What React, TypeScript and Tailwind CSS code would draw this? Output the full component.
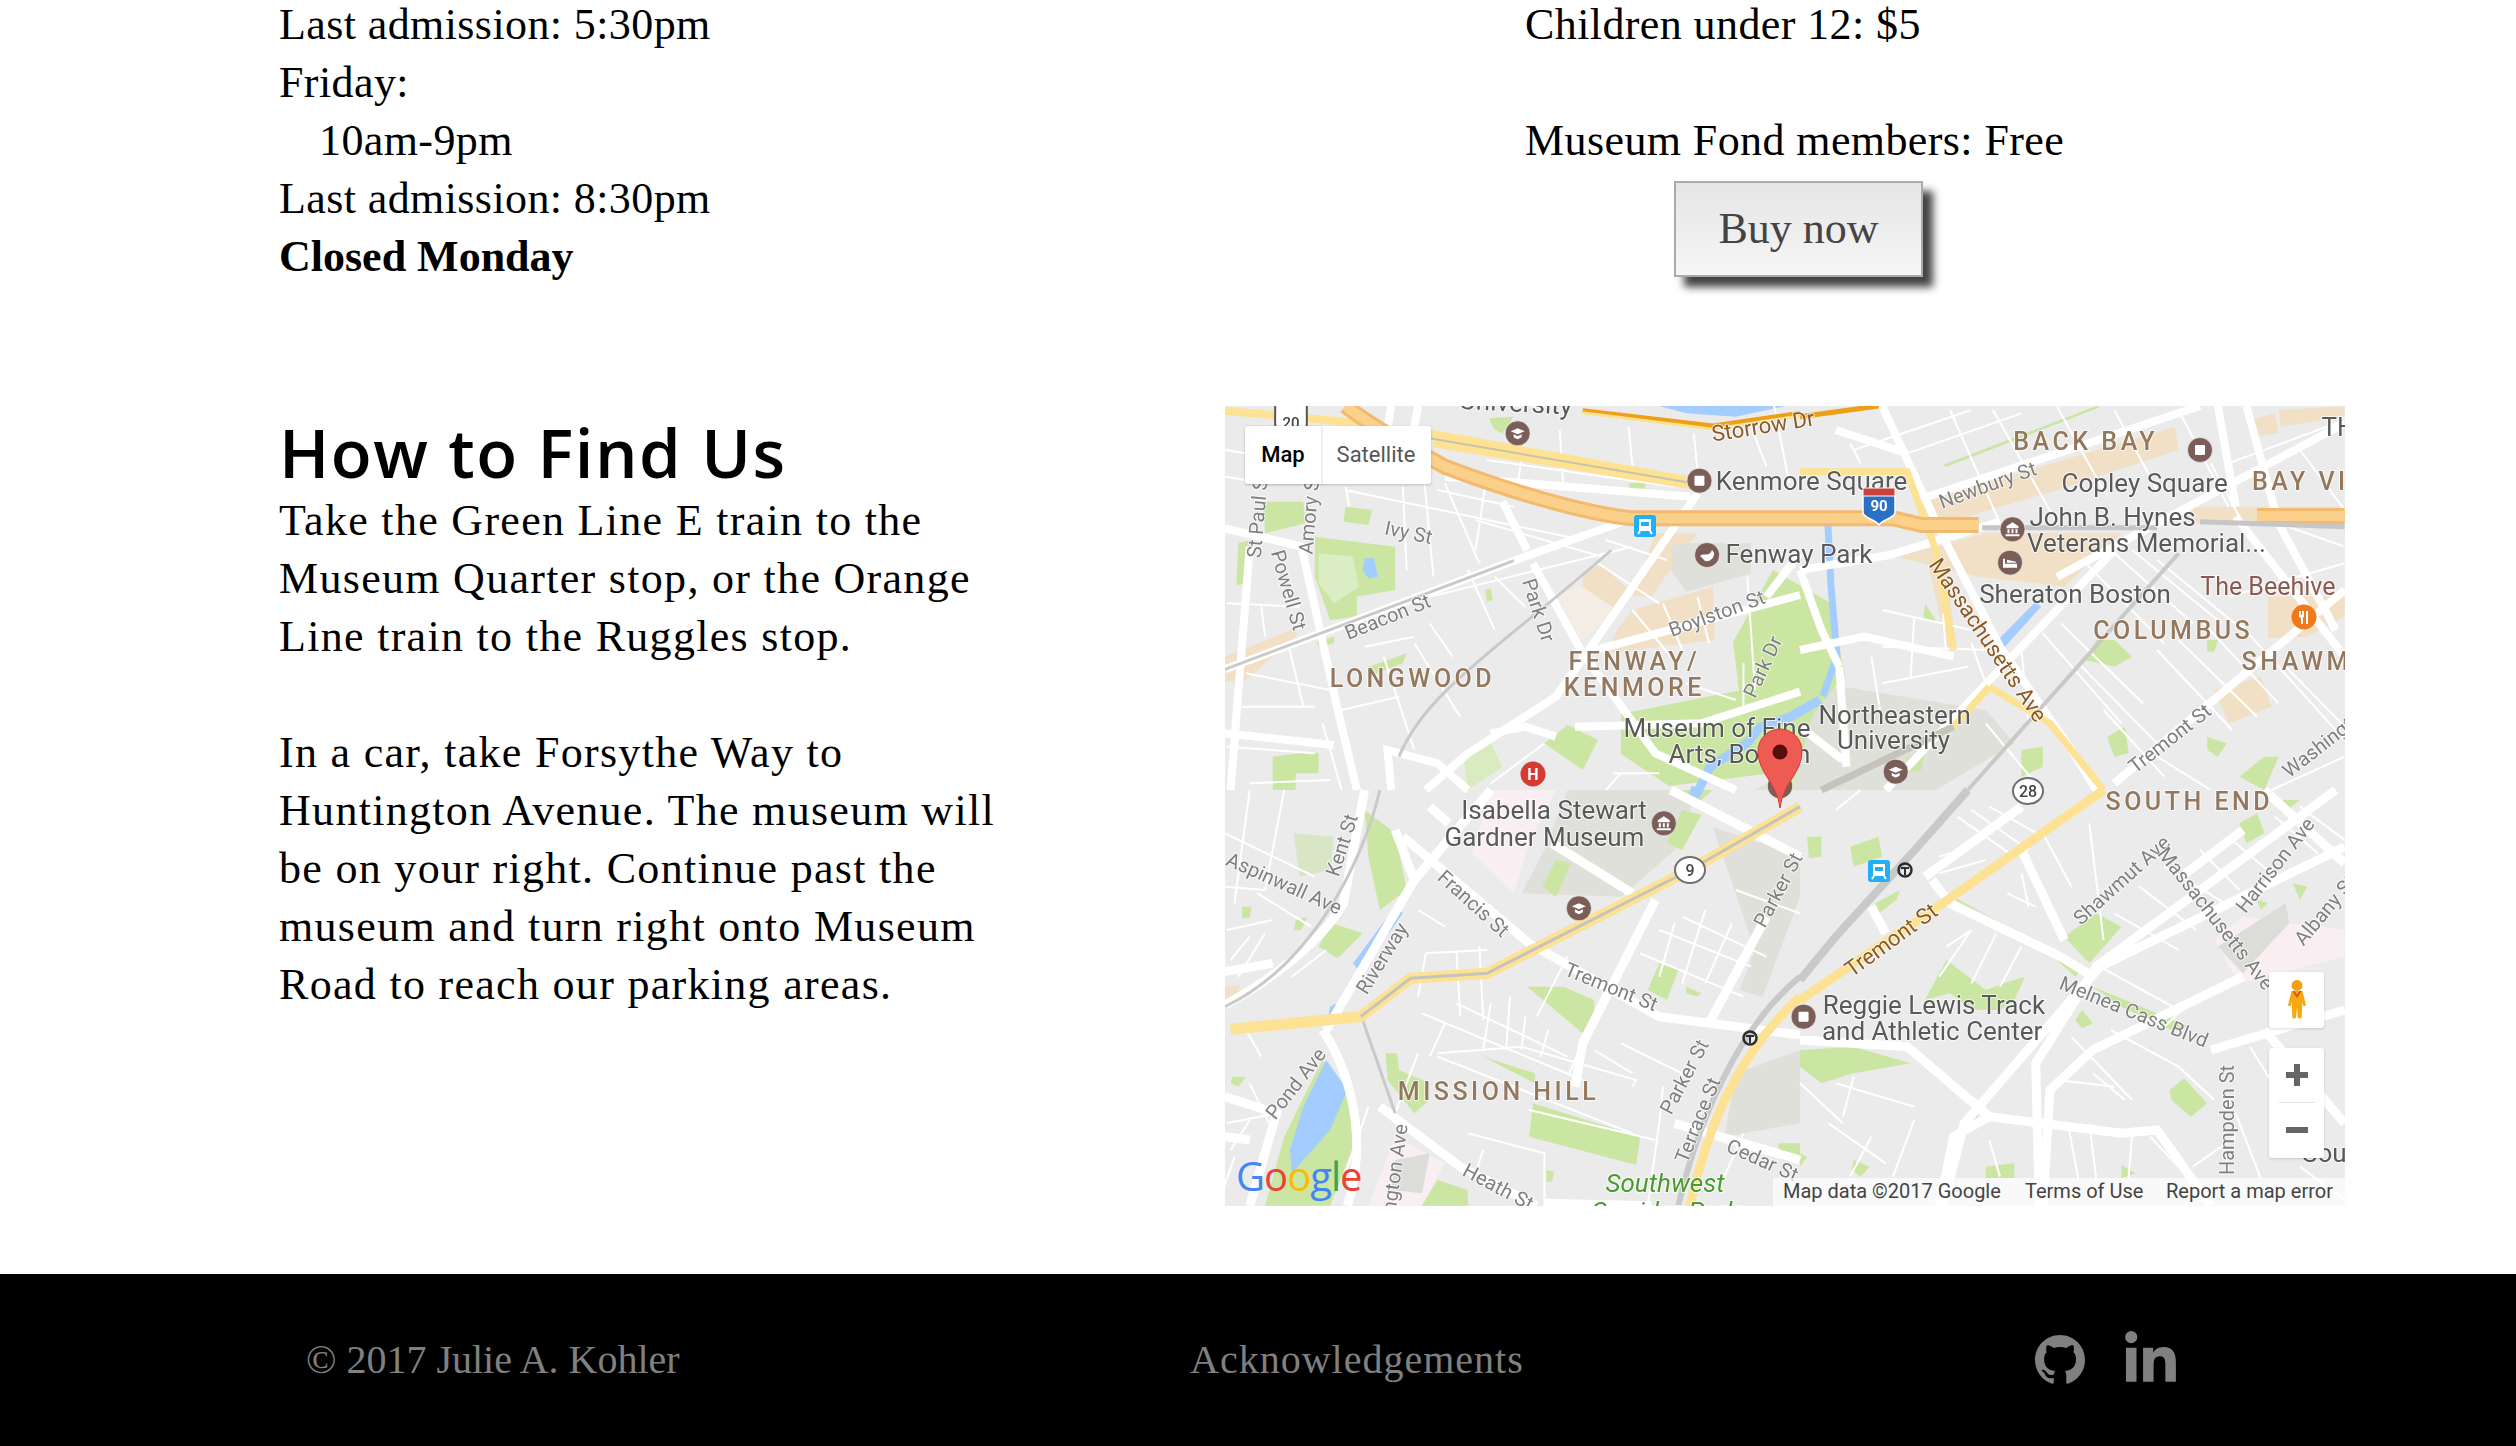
import React from 'react';
import { FaLinkedinIn } from 'react-icons/fa';

// zoomed-crop coordinates -> map pixels, one frame for each quarter of the map
const frames: Record<string, [number, number, number, number]> = {
  a: [-25, -16, 1 / 2.613, 1 / 3],
  b: [575, -16, 1 / 2.8, 1 / 3],
  c: [-25, 384, 1 / 2.613, 1 / 3],
  d: [575, 384, 1 / 2.8, 1 / 3],
  m: [0, 0, 1, 1],
};

const toMap = (q: string, x: number, y: number) => {
  const [ox, oy, sx, sy] = frames[q];
  return [ox + x * sx, oy + y * sy];
};

const areas: [string, string, string][] = [
  // tan blocks
  ['a', '#f1e0c6', '65,800 250,715 255,735 120,870 65,875'],
  ['a', '#f1e0c6', '1000,545 1050,525 1120,600 1040,700 1000,640'],
  ['a', '#f1e0c6', '1130,660 1340,590 1345,750 1060,790 1090,720'],
  ['a', '#f1e0c6', '1190,430 1300,430 1240,520 1180,620 1130,620'],
  ['a', '#f3ede5', '925,610 1000,590 1090,660 1000,750 930,680'],
  ['a', '#dfe0da', '1235,460 1440,460 1440,550 1270,605 1230,540'],
  ['b', '#f1e0c6', '330,340 1050,110 1060,180 720,300 340,420'],
  ['b', '#f1e0c6', '270,500 520,430 900,430 740,590 500,560'],
  ['b', '#f1e0c6', '1100,350 1525,350 1525,400 1100,400'],
  ['b', '#f1e0c6', '1260,90 1330,70 1340,130 1270,140'],
  ['b', '#f1e0c6', '1340,60 1525,48 1525,80 1345,110'],
  ['b', '#f1e0c6', '1310,620 1525,620 1525,680 1420,740 1310,745'],
  ['b', '#f1e0c6', '1160,900 1290,860 1320,950 1200,1000'],
  ['b', '#f1e0c6', '350,480 400,480 440,780 410,770'],
  ['b', '#dfe0da', '0,900 120,890 520,960 600,1060 380,1200 0,1200'],
  ['c', '#f1e0c6', '65,590 105,585 100,620 65,640'],
  ['c', '#f9eef1', '760,0 930,0 860,160 820,310 710,190'],
  ['c', '#dfe0da', '960,0 1300,0 1250,170 1100,320 840,310 900,180'],
  ['c', '#dfe0da', '1340,110 1568,200 1568,320 1470,620 1410,600 1450,480'],
  ['c', '#f9eef1', '510,1040 640,1120 580,1247 440,1247'],
  ['c', '#dcdcd8', '510,1110 600,1090 580,1210 500,1200'],
  ['c', '#dfe0da', '1400,850 1568,780 1568,1000 1370,1040'],
  ['d', '#f9eef1', '1160,450 1240,380 1525,420 1525,500 1230,580'],
  ['d', '#dcdcd8', '1170,470 1360,340 1370,400 1240,550'],
  ['d', '#dfe0da', '60,780 120,790 120,850 60,860'],
  // parks
  ['a', '#cbe6a3', '165,335 270,335 275,400 170,430'],
  ['a', '#cbe6a3', '380,350 450,360 440,405 375,395'],
  ['a', '#cbe6a3', '300,440 510,470 510,600 410,620 410,680 340,690 300,560'],
  ['a', '#dbeec3', '310,490 400,500 415,590 350,640 310,580'],
  ['a', '#cbe6a3', '100,460 130,450 130,580 95,585'],
  ['a', '#cbe6a3', '745,600 760,595 765,630 750,635'],
  ['a', '#cbe6a3', '305,755 350,740 350,760 310,770'],
  ['a', '#cbe6a3', '440,830 540,790 530,820 440,860'],
  ['a', '#cbe6a3', '190,1100 260,1090 310,1090 310,1150 250,1150 250,1200 190,1200'],
  ['a', '#d9ecc0', '690,1110 760,1060 790,1130 700,1200'],
  ['a', '#cbe6a3', '900,1060 960,1005 1040,1050 1000,1140 950,1100'],
  ['m', '#cbe6a3', '548,164 604,196 620,268 588,308 516,300 508,236'],
  ['m', '#cbe6a3', '396,308 516,284 588,308 572,364 444,380 396,348'],
  ['a', '#cbe6a3', '755,85 820,80 790,130 770,120'],
  ['a', '#cbe6a3', '1120,280 1165,275 1160,305 1125,305'],
  ['a', '#dbe6cc', '1450,1200 1568,1130 1568,1200'],
  ['b', '#cbe6a3', '350,640 385,700 345,690'],
  ['b', '#cbe6a3', '830,750 880,750 930,800 880,830 800,810'],
  ['b', '#cbe6a3', '1140,750 1170,750 1160,785 1140,785'],
  ['b', '#cbe6a3', '1140,1040 1195,1060 1170,1100 1140,1080'],
  ['b', '#cbe6a3', '860,1040 910,1010 920,1090 880,1100'],
  ['b', '#cbe6a3', '1300,1100 1340,1100 1300,1200 1230,1160'],
  ['b', '#cbe6a3', '620,1080 680,1070 680,1130 620,1160'],
  ['b', '#cbe6a3', '400,225 830,48 840,52 410,230'],
  ['b', '#cbe6a3', '300,1100 350,1090 340,1140 290,1150'],
  ['c', '#d9e6c6', '245,130 350,140 340,240 260,260'],
  ['c', '#cbe6a3', '110,350 135,350 130,385 110,385'],
  ['c', '#cbe6a3', '250,390 280,380 265,420 245,420'],
  ['c', '#cbe6a3', '345,400 425,430 360,505 310,470'],
  ['c', '#cbe6a3', '930,210 970,220 930,320 895,290'],
  ['c', '#cbe6a3', '1260,60 1310,75 1260,180 1220,160'],
  ['c', '#cbe6a3', '855,590 950,590 1030,630 1030,680 1000,730'],
  ['c', '#cbe6a3', '1200,520 1250,540 1220,630 1170,600'],
  ['c', '#cbe6a3', '1270,590 1310,610 1300,620 1270,610'],
  ['c', '#cbe6a3', '870,940 1150,1040 1140,1125 860,1040'],
  ['c', '#cbe6a3', '740,800 875,850 875,880'],
  ['c', '#cbe6a3', '485,790 515,790 520,840 600,880 600,930 560,970 490,870'],
  ['c', '#cbe6a3', '320,810 380,900 420,1000 390,1100 340,1247 170,1247 220,1040 280,900'],
  ['c', '#cbe6a3', '430,60 510,130 540,300 470,360 440,200'],
  ['c', '#cbe6a3', '85,860 120,860 100,890 80,880'],
  ['c', '#cbe6a3', '580,1247 620,1170 700,1200 700,1247'],
  ['c', '#cbe6a3', '1230,0 1340,0 1300,40 1250,20'],
  ['c', '#cbe6a3', '905,1140 925,1145 920,1175 905,1175'],
  ['c', '#cbe6a3', '1510,1060 1568,1060 1568,1120 1520,1110'],
  ['d', '#cbe6a3', '140,170 220,140 230,200 150,230'],
  ['d', '#cbe6a3', '20,140 60,140 60,200 25,205'],
  ['d', '#cbe6a3', '210,340 280,300 270,330 220,370'],
  ['d', '#cbe6a3', '350,630 410,510 520,600 570,580 630,560 600,630 560,660 480,660 420,610'],
  ['d', '#cbe6a3', '0,780 150,770 310,820 150,850 60,880 0,830'],
  ['d', '#cbe6a3', '740,440 830,370 900,410 810,520'],
  ['d', '#cbe6a3', '720,480 800,530 770,560 720,510'],
  ['d', '#cbe6a3', '790,660 820,700 790,715 770,690'],
  ['d', '#cbe6a3', '1035,900 1075,865 1140,940 1095,980 1040,930'],
  ['d', '#cbe6a3', '1230,100 1280,70 1300,130 1250,160'],
  ['d', '#cbe6a3', '1320,30 1400,30 1350,70'],
  ['d', '#cbe6a3', '1380,280 1420,290 1400,330'],
  ['d', '#cbe6a3', '1280,330 1310,340 1290,360'],
  ['d', '#cbe6a3', '150,1110 195,1130 170,1160 145,1140'],
  ['d', '#cbe6a3', '520,1130 600,1120 600,1165 520,1165'],
  ['d', '#cbe6a3', '900,1125 940,1150 900,1165'],
  ['d', '#cbe6a3', '480,960 500,980 480,990'],
  ['d', '#cbe6a3', '0,1090 20,1100 0,1130'],
  ['d', '#cbe6a3', '430,320 700,480 690,490 450,350'],
  ['d', '#cbe6a3', '820,590 1090,710 1040,720 900,650'],
  // water
  ['a', '#a3ccff', '430,505 455,505 465,560 440,565 425,540'],
  ['a', '#a3ccff', '1200,48 1530,48 1400,80 1270,70'],
  ['b', '#a3ccff', '545,760 660,635 675,650 570,775'],
  ['c', '#a3ccff', '330,810 385,900 340,1020 240,1150 235,1080 270,950'],
  ['c', '#a3ccff', '400,520 510,350 530,370 420,550'],
  ['c', '#a3ccff', '340,650 355,640 350,680 335,680'],
];

// [frame, width, colour, path]
const roads: [string, number, string, string][] = [
  ['m', 9, '#a3ccff', 'M595,294 L565,311 L535,321 L522,337 L485,361 L472,387 L465,384'],
  ['m', 7, '#a3ccff', 'M603,120 L606,180 L612,250 L598,290'],
  // small streets
  ['a', 2, '#fff', 'M530,290 L540,540 M585,260 L610,560 M640,280 L730,520 M745,290 L720,480 M380,290 L390,350 M65,180 L180,200 M65,260 L120,270 M380,300 L1000,450 M620,300 L820,350 M750,210 L1240,290 M850,140 L830,280 M940,120 L950,300 M1120,110 L1130,230 M1290,130 L1300,240 M1440,110 L1480,230 M1500,48 L1540,280 M720,390 L1050,500 M600,620 L1130,470 M700,540 L770,720 M770,560 L850,650 M1060,450 L1220,510 M1040,520 L1200,640 M1130,660 L1230,800 M1210,640 L1260,780 M1300,620 L1330,760 M1430,560 L1450,900 M70,640 L260,650 M160,650 L170,740 M560,760 L680,980 M430,770 L560,740 M480,800 L560,1080 M230,760 L270,950 M110,950 L300,950 M120,850 L340,900 M370,960 L520,920 M600,700 L660,800 M70,1070 L300,1090 M320,1000 L370,1200 M130,1180 L340,1170 M1270,880 L1400,930 M1420,960 L1420,820 M760,1180 L900,1060 M1080,1150 L1200,1150 M1100,1150 L1060,1200'],
  ['b', 2, '#fff', 'M150,180 L480,60 M300,190 L620,70 M420,60 L560,400 M540,60 L720,400 M720,50 L860,320 M880,60 L1000,300 M1060,60 L1200,350 M1150,220 L1250,420 M800,520 L1020,760 M860,470 L1100,700 M930,480 L1180,700 M1000,510 L1240,720 M680,730 L900,1000 M730,700 L960,940 M780,820 L1000,1060 M850,960 L1020,1160 M1000,780 L1210,1020 M1060,750 L1280,980 M1130,700 L1340,940 M1230,700 L1525,1050 M230,660 L480,720 M230,770 L540,780 M230,880 L470,830 M200,800 L230,1000 M320,680 L310,860 M400,670 L410,800 M480,760 L520,880 M620,780 L640,1000 M520,1000 L660,1180 M1525,90 L1200,220 M1400,180 L1525,360 M1340,400 L1525,470 M1525,520 L1200,620 M1525,1100 L1320,1200 M1360,830 L1525,1010 M1000,1100 L1150,1200 M140,160 L170,220'],
  ['c', 2, '#fff', 'M130,0 L90,340 M220,0 L170,300 M65,130 L300,260 M65,290 L170,300 M150,310 L290,410 M70,420 L190,390 M80,510 L130,440 M170,430 L100,560 M240,560 L330,480 M570,360 L640,410 M590,490 L750,480 M590,490 L570,620 M670,480 L680,680 M730,470 L740,690 M580,670 L1000,870 M640,700 L600,800 M670,640 L960,800 M760,640 L740,780 M810,620 L800,780 M850,680 L840,780 M910,720 L890,800 M620,790 L840,770 L1140,870 L1130,890 M620,800 L1130,1030 M570,790 L510,970 M965,850 L1000,760 M860,960 L1190,1050 M1030,780 L1130,850 M1100,760 L1260,850 M1150,490 L1420,620 M1200,420 L1440,530 M1260,380 L1480,500 M1240,400 L1200,560 M1320,360 L1260,580 M1390,400 L1320,580 M1210,890 L1200,1000 M1200,1000 L1170,1247 M700,1030 L900,1090 L900,1247 M740,1080 L720,1150 M440,950 L380,1150 M80,1080 L130,990 M90,1100 L60,1200 M130,880 L180,1000 M120,720 L160,800 M1420,1030 L1370,1160 M960,500 L880,680 M1568,370 L1400,300 M70,1000 L200,970'],
  ['d', 2, '#fff', 'M100,60 L170,0 M440,80 L600,200 M480,60 L640,180 M530,50 L680,140 M390,200 L480,170 M390,250 L520,210 M410,470 L480,420 M480,420 L390,560 M550,430 L480,580 M620,470 L560,590 M620,250 L640,350 M580,310 L660,350 M810,100 L850,450 M680,130 L760,290 M880,370 L1060,480 M950,290 L1110,420 M1020,230 L1190,340 M1120,180 L1230,300 M1210,150 L1330,260 M1330,80 L1450,190 M1400,50 L1525,150 M840,530 L1060,660 M1100,630 L1010,720 M870,720 L1060,830 M760,740 L930,930 M820,850 L910,930 M720,870 L880,890 M150,860 L120,980 M100,880 L320,950 M0,880 L120,1000 M80,1000 L240,1120 M320,990 L260,1160 M400,860 L520,950 M200,1040 L140,1160 M750,1000 L780,1170 M810,1000 L830,1170 M930,1030 L920,1165 M1060,830 L1160,930 M980,1040 L1090,1165 M1260,770 L1380,980 M1220,970 L1290,1165 M530,1050 L560,1160 M1400,1130 L1525,1230 M1100,1130 L1220,1040'],
  // through roads
  ['a', 8, '#fff', 'M65,838 L820,512 L1130,385 M855,480 L790,335 M870,520 L1000,790 L1190,1090 L1400,1200 M1300,310 L1010,790 L930,920 L700,1090 L590,1200 M65,415 L265,470 L360,960 L410,1200 M130,470 L80,1200 M1000,790 L1568,615 M65,1030 L350,1065 M1568,905 L1310,1000 L980,1010 M1568,490 L1480,620 M500,1200 L490,1080 L620,1120 L700,1200 M760,1030 L850,1010 L930,1040 M570,48 L560,110 M500,48 L490,110 M640,260 L1280,320'],
  ['b', 8, '#fff', 'M230,48 L400,440 L560,770 L760,1080 L830,1200 M880,480 L540,860 L240,1200 M0,540 L250,495 L560,395 M330,330 L1120,48 M1250,48 L1340,400 L1500,720 M1525,600 L880,1180 M1220,380 L1525,800 M1525,100 L720,560 M0,540 L60,720 L110,830 M0,780 L180,740 L430,800 M1170,48 L1220,350 M100,120 L300,190 M110,830 L130,1130 M0,1010 L120,1110'],
  ['c', 9, '#fff', 'M65,645 C200,560 320,450 375,340 L430,0 M330,720 L560,270 L760,0 M385,1247 C450,1010 370,800 320,720 M530,140 L860,460 L1200,680 L1568,735 M1190,330 L1000,760 L980,890 M920,160 L1130,310 M65,545 L190,520 M1240,1000 L1568,1110 M470,950 L680,1130 L880,1247 M65,920 L200,970 L130,1247 M1480,380 L1330,700 M1230,0 L1568,200 M510,120 L560,270 M600,50 L650,100 M65,1040 L130,1050 M1180,1247 L900,1240'],
  ['d', 9, '#fff', 'M350,260 L620,50 M370,270 L420,340 L730,500 L820,560 M620,180 L740,450 M1080,250 L1240,120 M1525,170 L840,530 L460,1000 L400,1247 M1500,0 L830,530 L660,820 L670,1247 M1240,560 L820,780 L700,900 L680,1247 M0,750 L300,770 L530,980 L900,1030 L1000,1020 L1150,1247 M1150,780 L1525,660 M1300,720 L1525,1000 M530,980 L430,1040 L390,1247 M200,350 L240,430 M1300,0 L1525,220'],
  // rail lines
  ['c', 6, '#c9c9c9', 'M1568,560 C1400,720 1300,1000 1250,1247'],
  ['c', 3, '#c9c9c9', 'M470,0 C430,200 300,520 65,650 M425,690 L510,970'],
  ['d', 8, '#c9c9c9', 'M0,570 L100,440 L330,170 L470,0'],
  ['b', 4, '#c9c9c9', 'M470,1200 L1060,490'],
  ['a', 3, '#c9c9c9', 'M520,1100 C590,900 800,760 1075,480 M65,838 L820,512'],
  // storrow, the pike and the yellow avenues
  ['a', 8, '#fde293', 'M65,62 L420,100 M600,130 L1270,270 M610,160 L1280,285'],
  ['a', 2, '#c8c2a8', 'M600,145 L1280,278'],
  ['b', 7, '#fde293', 'M0,245 L300,245 L380,480 L430,780 M60,1200 L430,1010 L530,890 M530,890 L700,1000 L850,1200'],
  ['c', 11, '#fde293', 'M80,718 L420,680 L550,565 L750,550 L1280,240 L1568,50'],
  ['c', 3, '#c4c4bc', 'M420,680 L550,565 L750,550 L1280,240 L1568,50'],
  ['c', 9, '#fde293', 'M1568,620 C1400,800 1330,1000 1280,1247'],
  ['d', 9, '#fde293', 'M0,630 L400,340 L850,0'],
  ['b', 7, '#c4c4bc', 'M60,1200 L430,1010'],
  ['a', 16, '#f3b96d', 'M380,48 C450,110 560,180 640,230 C800,300 1000,370 1130,385 L1568,385'],
  ['a', 10, '#fad08a', 'M380,48 C450,110 560,180 640,230 C800,300 1000,370 1130,385 L1568,385'],
  ['b', 16, '#f3b96d', 'M0,385 L260,385 L340,405 L500,405 M1280,378 L1525,378'],
  ['b', 10, '#fad08a', 'M0,385 L260,385 L340,405 L500,405 M1280,378 L1525,378'],
  ['b', 5, '#c6c6c6', 'M510,413 L1000,413 M1120,395 L1525,410'],
  ['a', 5, '#ee9f16', 'M1000,62 L1340,108 L1568,70'],
  ['a', 3, '#fde293', 'M1000,68 L1340,118 L1568,78'],
  ['b', 5, '#ee9f16', 'M0,80 L220,48'],
];

type Kind = 'place' | 'street' | 'road' | 'hood' | 'food' | 'park';

const kinds: Record<Kind, string> = {
  place: 'text-[26px] fill-[#595959]',
  street: 'text-[20px] fill-[#7f7f7f]',
  road: 'text-[22px] fill-[#8a5a24]',
  hood: 'text-[25px] font-medium tracking-[3.5px] fill-[#93785e]',
  food: 'text-[25px] fill-[#8a5a50]',
  park: 'text-[26px] italic fill-[#4c9a2f]',
};

// [frame, x, y, text, kind, rotation]
const labels: [string, number, number, string, Kind, number][] = [
  ['a', 825, 38, 'University', 'place', 3],
  ['m', 538, 20, 'Storrow Dr', 'road', -9],
  ['a', 1598, 273, 'Kenmore Square', 'place', 0],
  ['a', 1565, 492, 'Fenway Park', 'place', 0],
  ['a', 545, 427, 'Ivy St', 'street', 12],
  ['a', 150, 375, 'St Paul St', 'street', -85],
  ['a', 285, 370, 'Amory St', 'street', -85],
  ['a', 232, 600, 'Powell St', 'street', 74],
  ['a', 490, 680, 'Beacon St', 'street', -22],
  ['a', 885, 660, 'Park Dr', 'street', 72],
  ['a', 1350, 670, 'Boylston St', 'street', -20],
  ['a', 1470, 830, 'Park Dr', 'street', -65],
  ['a', 555, 865, 'LONGWOOD', 'hood', 0],
  ['a', 1135, 815, 'FENWAY/', 'hood', 0],
  ['a', 1135, 893, 'KENMORE', 'hood', 0],
  ['m', 1070 * 1.6046 - 1225, 454 * 1.6046 - 406, 'Museum of Fine', 'place', 0],
  ['m', 1084 * 1.6046 - 1225, 470 * 1.6046 - 406, 'Arts, Boston', 'place', 0],
  ['b', 800, 155, 'BACK BAY', 'hood', 0],
  ['b', 525, 285, 'Newbury St', 'street', -20],
  ['b', 965, 278, 'Copley Square', 'place', 0],
  ['b', 1530, 275, 'BAY VILLAGE', 'hood', 0],
  ['b', 1615, 110, 'THEATER', 'place', 0],
  ['b', 875, 380, 'John B. Hynes', 'place', 0],
  ['b', 970, 458, 'Veterans Memorial...', 'place', 0],
  ['b', 770, 612, 'Sheraton Boston', 'place', 0],
  ['b', 1310, 590, 'The Beehive', 'food', 0],
  ['b', 1045, 720, 'COLUMBUS', 'hood', 0],
  ['b', 1445, 815, 'SHAWMUT', 'hood', 0],
  ['b', 527, 750, 'Massachusetts Ave', 'road', 56],
  ['b', 265, 975, 'Northeastern', 'place', 0],
  ['b', 262, 1050, 'University', 'place', 0],
  ['b', 1035, 1045, 'Tremont St', 'street', -38],
  ['b', 1500, 1030, 'Washington St', 'street', -38],
  ['c', 370, 165, 'Kent St', 'street', -72],
  ['c', 220, 280, 'Aspinwall Ave', 'street', 24],
  ['c', 925, 60, 'Isabella Stewart', 'place', 0],
  ['c', 900, 140, 'Gardner Museum', 'place', 0],
  ['c', 715, 340, 'Francis St', 'street', 42],
  ['c', 475, 505, 'Riverway', 'street', -58],
  ['c', 1075, 590, 'Tremont St', 'street', 22],
  ['c', 1510, 300, 'Parker St', 'street', -62],
  ['c', 250, 880, 'Pond Ave', 'street', -52],
  ['c', 780, 905, 'MISSION HILL', 'hood', 0],
  ['c', 1265, 860, 'Parker St', 'street', -62],
  ['c', 1300, 990, 'Terrace St', 'street', -68],
  ['c', 500, 1205, 'Huntington Ave', 'street', -82],
  ['c', 780, 1190, 'Heath St', 'street', 28],
  ['c', 1470, 1110, 'Cedar St', 'street', 24],
  ['c', 1215, 1178, 'Southwest', 'park', 0],
  ['c', 1215, 1262, 'Corridor Park', 'park', 0],
  ['d', 1090, 35, 'SOUTH END', 'hood', 0],
  ['d', 900, 270, 'Shawmut Ave', 'street', -42],
  ['d', 1165, 385, 'Massachusetts Ave', 'street', 52],
  ['d', 1330, 225, 'Harrison Ave', 'street', -52],
  ['d', 1470, 360, 'Albany St', 'street', -50],
  ['d', 255, 450, 'Tremont St', 'road', -36],
  ['d', 375, 645, 'Reggie Lewis Track', 'place', 0],
  ['d', 370, 722, 'and Athletic Center', 'place', 0],
  ['d', 935, 665, 'Melnea Cass Blvd', 'street', 22],
  ['d', 1195, 990, 'Hampden St', 'street', -90],
  ['d', 1500, 1090, 'South', 'place', 0],
];

// [frame, x, y, glyph]
const pois: [string, number, number, string][] = [
  ['a', 830, 130, 'cap'],
  ['a', 1305, 272, 'square'],
  ['a', 1325, 495, 'ball'],
  ['b', 595, 418, 'hall'],
  ['b', 588, 518, 'bed'],
  ['b', 1120, 180, 'square'],
  ['b', 268, 1145, 'cap'],
  ['c', 1212, 100, 'hall'],
  ['c', 990, 355, 'cap'],
  ['m', 555, 380, 'hall'],
  ['m', 575 + 10 / 2.8, 384 + 680 / 3, 'square'],
];

const PoiGlyph = ({ type }: { type: string }) => {
  if (type === 'square') return <rect x="-5" y="-5" width="10" height="10" rx="1" fill="#fff" />;
  if (type === 'cap') return <path d="M-7,-2 L0,-5 L7,-2 L0,1 Z M-4,1 L0,3 L4,1 L4,4 L0,6 L-4,4 Z" fill="#fff" />;
  if (type === 'bed') return <path d="M-7,-4 L-5,-4 L-5,1 L7,1 L7,5 L-7,5 Z M-3,-3 L6,-1 L6,0 L-3,0 Z" fill="#fff" />;
  if (type === 'ball') return <path d="M-7,1 C-3,-3 1,3 5,-5 L7,-2 C7,4 2,7 -2,6 Z" fill="#fff" />;
  return <path d="M0,-7 L6,-3 L6,-1 L-6,-1 L-6,-3 Z M-5,0 L-3,0 L-3,4 L-5,4 Z M-1,0 L1,0 L1,4 L-1,4 Z M3,0 L5,0 L5,4 L3,4 Z M-7,5 L7,5 L7,7 L-7,7 Z" fill="#fff" />;
};

const Shield = ({ x, y, n }: { x: number; y: number; n: string }) => (
  <g transform={`translate(${x} ${y})`}>
    <ellipse rx="15" ry="13" fill="#fff" stroke="#6f6f6f" strokeWidth="2" />
    <text textAnchor="middle" dominantBaseline="central" className="text-[16px] font-medium fill-[#444]">{n}</text>
  </g>
);

const TransitMark = ({ x, y }: { x: number; y: number }) => (
  <g transform={`translate(${x} ${y})`}>
    <rect x="-11" y="-11" width="22" height="22" rx="3" fill="#22b0f5" />
    <path d="M-6,-7 L6,-7 L6,5 L-6,5 Z" fill="#fff" />
    <rect x="-4" y="-4" width="8" height="4" fill="#22b0f5" />
    <path d="M-5,5 L-7,8 M5,5 L7,8" stroke="#fff" strokeWidth="2" />
  </g>
);

const SubwayMark = ({ x, y }: { x: number; y: number }) => (
  <g transform={`translate(${x} ${y})`} fill="none" stroke="#2c2c2c">
    <circle r="6.5" strokeWidth="2.5" />
    <path d="M-4,-2 L4,-2 M0,-2 L0,5" strokeWidth="2" />
  </g>
);

const MapDrawing = () => (
  <svg viewBox="0 0 1120 800" className="absolute inset-0 h-full w-full blur-[0.7px] font-['Roboto',sans-serif]">
    <rect width="1120" height="800" fill="#ebebeb" />
    {areas.map(([q, color, points], i) => {
      const [ox, oy, sx, sy] = frames[q];
      return <polygon key={i} points={points} fill={color} transform={`translate(${ox} ${oy}) scale(${sx} ${sy})`} />;
    })}
    {roads.map(([q, width, color, d], i) => {
      const [ox, oy, sx, sy] = frames[q];
      return (
        <path
          key={i}
          d={d}
          fill="none"
          stroke={color}
          strokeWidth={width}
          vectorEffect="non-scaling-stroke"
          transform={`translate(${ox} ${oy}) scale(${sx} ${sy})`}
        />
      );
    })}
    {labels.map(([q, x, y, text, kind, rot], i) => {
      const [mx, my] = toMap(q, x, y);
      return (
        <text
          key={i}
          transform={`translate(${mx} ${my}) rotate(${rot})`}
          textAnchor="middle"
          dominantBaseline="central"
          stroke="#ffffff"
          strokeOpacity="0.7"
          strokeWidth="2"
          paintOrder="stroke"
          className={kinds[kind]}
        >
          {text}
        </text>
      );
    })}
    {pois.map(([q, x, y, type], i) => {
      const [mx, my] = toMap(q, x, y);
      return (
        <g key={i} transform={`translate(${mx} ${my})`}>
          <circle r="12.5" fill="#7b5e57" stroke="#fff" strokeOpacity="0.6" />
          <PoiGlyph type={type} />
        </g>
      );
    })}
    <g transform="translate(308 368)">
      <circle r="12.5" fill="#d63a32" />
      <text textAnchor="middle" dominantBaseline="central" className="text-[16px] font-bold fill-white">H</text>
    </g>
    <g transform="translate(1079 211)">
      <circle r="12.5" fill="#ef7a1a" />
      <path d="M-4,-6 L-4,-1 L-2,1 L-2,7 M-1,-6 L-1,-1 L-4,-1 M3,-6 L3,7" stroke="#fff" strokeWidth="2" fill="none" />
    </g>
    <Shield x={465} y={464} n="9" />
    <Shield x={803} y={385} n="28" />
    <g transform="translate(654 99)">
      <path d="M-16,-12 L16,-12 L16,8 C14,14 4,14 0,20 C-4,14 -14,14 -16,8 Z" fill="#2d6fc4" stroke="#fff" strokeWidth="1.5" />
      <path d="M-16,-17 L16,-17 L16,-9 L-16,-9 Z" fill="#c9403a" stroke="#fff" strokeWidth="1" />
      <text y="1" textAnchor="middle" dominantBaseline="central" className="text-[15px] font-bold fill-white">90</text>
    </g>
    <g transform="translate(66 26)">
      <path d="M-17,-40 L17,-40 C14,-20 18,-8 14,4 L-14,4 C-18,-8 -14,-20 -17,-40 Z" fill="#fff" stroke="#555" strokeWidth="2" />
      <text y="-9" textAnchor="middle" dominantBaseline="central" className="text-[15px] font-medium fill-[#444]">20</text>
    </g>
    <TransitMark x={420} y={120} />
    <TransitMark x={654} y={465} />
    <SubwayMark x={680} y={464} />
    <SubwayMark x={525} y={632} />
    <circle cx="555" cy="380" r="12" fill="#7b5e57" />
    <path d="M555,402 C552,376 533,368 533,345 A22,22 0 1 1 577,345 C577,368 558,376 555,402 Z" fill="#ee5b52" stroke="#d33d35" strokeWidth="1" />
    <circle cx="555" cy="346" r="7.5" fill="#560e0a" />
  </svg>
);

const MapPanel = () => (
  <div className="relative h-[800px] w-[1120px] shrink-0 overflow-hidden font-['Roboto',sans-serif] tracking-normal">
    <MapDrawing />
    <div className="absolute left-[20px] top-[20px] flex h-[58px] w-[186px] rounded-[3px] bg-white text-[22px] shadow-[0_1px_3px_rgba(0,0,0,0.2)]">
      <div className="flex w-[76px] items-center justify-center font-medium text-black shadow-[1px_0_2px_rgba(0,0,0,0.12)]">Map</div>
      <div className="flex flex-1 items-center justify-center text-[#565656]">Satellite</div>
    </div>
    <div className="absolute left-[1044px] top-[566px] flex h-[56px] w-[55px] items-center justify-center rounded-[3px] bg-white shadow-[0_1px_3px_rgba(0,0,0,0.15)]">
      <svg viewBox="0 0 24 44" className="h-[40px] w-[22px]">
        <circle cx="12" cy="6" r="6" fill="#f0a30f" />
        <path d="M6,12 L18,12 L22,28 L19,29 L18,24 L17,42 L13,42 L12,30 L11,42 L7,42 L6,24 L5,29 L2,28 Z" fill="#f5a90e" />
        <path d="M8,12 L12,18 L16,12" fill="none" stroke="#d2561c" strokeWidth="2" />
      </svg>
    </div>
    <div className="absolute left-[1044px] top-[642px] flex h-[110px] w-[55px] flex-col items-center rounded-[3px] bg-white shadow-[0_1px_3px_rgba(0,0,0,0.15)]">
      <svg viewBox="0 0 24 24" className="mt-[15px] h-[24px] w-[24px]">
        <path d="M9,1 L15,1 L15,9 L23,9 L23,15 L15,15 L15,23 L9,23 L9,15 L1,15 L1,9 L9,9 Z" fill="#666" />
      </svg>
      <div className="mt-[15px] h-px w-[36px] bg-[#e2e2e2]" />
      <svg viewBox="0 0 24 24" className="mt-[15px] h-[24px] w-[24px]">
        <rect x="1" y="9" width="22" height="6" fill="#666" />
      </svg>
    </div>
    <div className="absolute bottom-[8px] left-[11px] text-[40px] leading-[44px] tracking-[-1px] font-['Open_Sans',sans-serif]">
      <span className="text-[#4285f4]">G</span>
      <span className="text-[#ea4335]">o</span>
      <span className="text-[#fbbc05]">o</span>
      <span className="text-[#4285f4]">g</span>
      <span className="text-[#34a853]">l</span>
      <span className="text-[#ea4335]">e</span>
    </div>
    <div className="absolute bottom-0 right-0 flex h-[28px] w-[572px] items-center whitespace-nowrap bg-white/70 pb-[2px] pl-[10px] text-[20px] text-[#444]">
      <span className="w-[242px]">Map data ©2017 Google</span>
      <span className="w-[141px]">Terms of Use</span>
      <span>Report a map error</span>
    </div>
  </div>
);

const Lines = ({ lines }: { lines: string[] }) => (
  <React.Fragment>
    {lines.map((line, i) => (
      <p key={i} className="h-[58px] whitespace-nowrap">
        {line}
      </p>
    ))}
  </React.Fragment>
);

export default function App() {
  return (
    <div className="w-full overflow-hidden bg-white font-['Liberation_Serif',serif] text-[44px] leading-[58px] text-black">
      <section className="-mt-[4px] flex pl-[279px] tracking-[0.4px]">
        <div className="w-[1246px]">
          <Lines lines={['Last admission: 5:30pm', 'Friday:']} />
          <p className="h-[58px] pl-[40px]">10am-9pm</p>
          <p className="h-[58px]">Last admission: 8:30pm</p>
          <p className="h-[58px] font-bold tracking-normal">Closed Monday</p>
        </div>
        <div>
          <Lines lines={['Children under 12: $5', '\u00a0', 'Museum Fond members: Free']} />
          <button className="ml-[149px] mt-[11px] block h-[96px] w-[249px] border-2 border-[#aaaaaa] bg-gradient-to-b from-[#e5e5e5] to-[#f6f6f6] text-[44px] tracking-normal text-[#444] shadow-[10px_10px_8px_#444]">
            Buy now
          </button>
        </div>
      </section>
      <section className="mt-[120px] flex pl-[279px]">
        <div className="w-[946px] tracking-[1.3px]">
          <h2 className="h-[86px] pt-[3px] font-['Open_Sans',sans-serif] text-[67px] font-semibold leading-[86px] tracking-[1.5px]">
            How to Find Us
          </h2>
          <Lines
            lines={[
              'Take the Green Line E train to the',
              'Museum Quarter stop, or the Orange',
              'Line train to the Ruggles stop.',
              '\u00a0',
              'In a car, take Forsythe Way to',
              'Huntington Avenue. The museum will',
              'be on your right. Continue past the',
              'museum and turn right onto Museum',
              'Road to reach our parking areas.',
            ]}
          />
        </div>
        <MapPanel />
      </section>
      <footer className="mt-[68px] flex h-[172px] items-center bg-black pl-[306px] text-[40px] text-[#808080]">
        <div className="w-[884px]">© 2017 Julie A. Kohler</div>
        <div className="w-[845px] tracking-[1px]">Acknowledgements</div>
        <a className="mr-[40px]">
          <svg viewBox="0 0 16 16" className="h-[50px] w-[50px] fill-[#808080]">
            <path d="M8 0C3.58 0 0 3.58 0 8c0 3.54 2.29 6.53 5.47 7.59.4.07.55-.17.55-.38 0-.19-.01-.82-.01-1.49-2.01.37-2.53-.49-2.69-.94-.09-.23-.48-.94-.82-1.13-.28-.15-.68-.52-.01-.53.63-.01 1.08.58 1.23.82.72 1.21 1.87.87 2.33.66.07-.52.28-.87.51-1.07-1.78-.2-3.64-.89-3.64-3.95 0-.87.31-1.59.82-2.15-.08-.2-.36-1.02.08-2.12 0 0 .67-.21 2.2.82.64-.18 1.32-.27 2-.27.68 0 1.36.09 2 .27 1.53-1.04 2.2-.82 2.2-.82.44 1.1.16 1.92.08 2.12.51.56.82 1.27.82 2.15 0 3.07-1.87 3.75-3.65 3.95.29.25.54.73.54 1.48 0 1.07-.01 1.93-.01 2.2 0 .21.15.46.55.38A8.013 8.013 0 0016 8c0-4.42-3.58-8-8-8z" />
          </svg>
        </a>
        <a>
          <FaLinkedinIn className="h-[58px] w-[51px] text-[#808080]" />
        </a>
      </footer>
    </div>
  );
}
